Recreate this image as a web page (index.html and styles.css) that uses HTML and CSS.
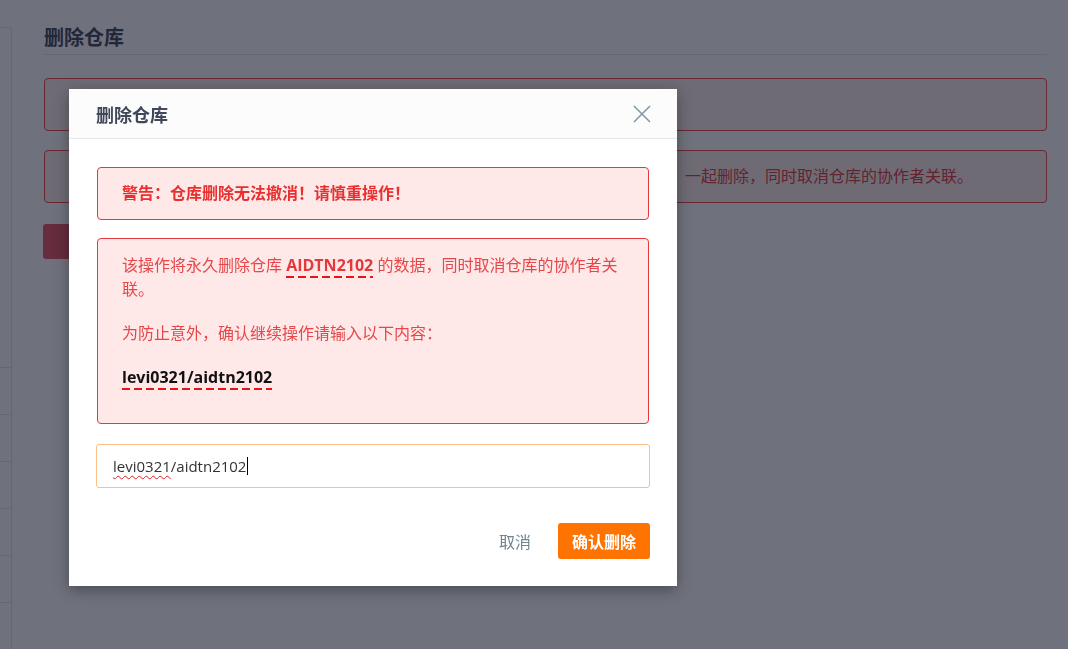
FILE: index.html
```html
<!DOCTYPE html>
<html lang="zh-CN">
<head>
<meta charset="utf-8">
<title>删除仓库</title>
<link rel="stylesheet" href="styles.css">
</head>
<body>
<div class="page">
  <aside class="sidebar">
    <div class="side-top"></div>
    <div class="side-row"></div>
    <div class="side-row"></div>
    <div class="side-row"></div>
    <div class="side-row"></div>
    <div class="side-row"></div>
    <div class="side-row"></div>
  </aside>
  <main class="main">
    <h2 class="page-title">删除仓库</h2>
    <div class="bg-alert">删除仓库是不可恢复的操作，请谨慎操作。</div>
    <div class="bg-alert">删除仓库将会把仓库中的代码、提交记录、分支、标签、评论、附件以及所有相关数据&ensp;一起删除，同时取消仓库的协作者关联。</div>
    <button class="bg-btn">删除仓库</button>
  </main>
</div>

<div class="overlay">
  <div class="modal">
    <div class="modal-header">
      <span class="modal-title">删除仓库</span>
      <button class="close" aria-label="关闭">
        <svg width="18" height="18" viewBox="0 0 18 18"><path d="M1 1 L17 17 M17 1 L1 17" stroke="#8399a6" stroke-width="1.6" fill="none"/></svg>
      </button>
    </div>
    <div class="modal-body">
      <div class="alert alert-warn">警告：仓库删除无法撤消！请慎重操作！</div>
      <div class="alert alert-info">
        <p>该操作将永久删除仓库 <b class="dash">AIDTN2102</b> 的数据，同时取消仓库的协作者关联。</p>
        <p>为防止意外，确认继续操作请输入以下内容：</p>
        <p><b class="dash dark">levi0321/aidtn2102</b></p>
      </div>
      <div class="input"><span class="spell">levi0321</span>/aidtn2102<span class="caret"></span></div>
    </div>
    <div class="modal-footer">
      <button class="btn-cancel">取消</button>
      <button class="btn-danger">确认删除</button>
    </div>
  </div>
</div>
</body>
</html>
```

FILE: styles.css
```css
* { box-sizing: border-box; }
html, body { margin: 0; height: 100%; }
body {
  background: #fff;
  font-family: "Open Sans", "Noto Sans CJK SC", sans-serif;
  color: #333;
  overflow: hidden;
}
button { font-family: inherit; cursor: pointer; }

.page { display: flex; height: 100vh; }

.sidebar {
  width: 12px;
  margin-top: 27px;
  border-top: 1px solid #e3e3e6;
  border-right: 1px solid #e3e3e6;
  border-radius: 0 4px 0 0;
}
.side-top { height: 340px; border-bottom: 1px solid #e3e3e6; }
.side-row { height: 47px; border-bottom: 1px solid #e3e3e6; }

.main {
  margin-left: 32px;
  width: 1003px;
  padding-top: 24px;
  display: flex;
  flex-direction: column;
  align-items: flex-start;
}
.page-title {
  align-self: stretch;
  margin: 0;
  font-size: 20px;
  font-weight: bold;
  line-height: 28px;
  color: #40485b;
  padding-bottom: 2px;
  border-bottom: 1px solid #e6e6ea;
}
.bg-alert {
  align-self: stretch;
  margin-top: 23px;
  padding: 14px 24px 14px 24px;
  line-height: 23px;
  font-size: 16px;
  color: #e4393c;
  background: #fff0ee;
  border: 1px solid #f04a4c;
  border-radius: 4px;
  white-space: nowrap;
}
.bg-alert + .bg-alert { margin-top: 19px; }
.bg-btn {
  margin-top: 21px;
  margin-left: -1px;
  width: 120px;
  height: 35px;
  border: none;
  border-radius: 3px;
  background: #e65565;
  color: #fff;
  font-size: 15px;
}

.overlay {
  position: fixed;
  inset: 0;
  background: rgba(15, 18, 37, 0.6);
}
.modal {
  margin: 89px 0 0 69px;
  width: 608px;
  background: #fff;
  box-shadow: 0 4px 14px rgba(0, 0, 0, 0.35);
}
.modal-header {
  height: 50px;
  background: #fcfcfc;
  border-bottom: 1px solid #e3e8ee;
  display: flex;
  align-items: center;
  justify-content: space-between;
  padding: 0 26px 0 27px;
}
.modal-title {
  font-size: 18px;
  font-weight: bold;
  color: #40485b;
}
.close {
  width: 18px;
  height: 18px;
  padding: 0;
  border: none;
  background: none;
  display: flex;
}

.modal-body { padding: 28px 28px 0; }
.alert {
  border: 1px solid #e4393c;
  border-radius: 4px;
  background: #ffe8e8;
  padding: 14px 24px;
  font-size: 16px;
}
.alert-warn {
  line-height: 23px;
  font-weight: bold;
  color: #e8302f;
}
.alert-info {
  margin-top: 18px;
  line-height: 24px;
  color: #e5474a;
}
.alert-info p { margin: 0 0 20px; }
.dash {
  font-weight: bold;
  color: #e4393c;
  padding-bottom: 2px;
  background-image: linear-gradient(to right, #e8141a 0 8px, transparent 8px 12px);
  background-size: 12px 2px;
  background-repeat: repeat-x;
  background-position: left bottom;
}
.dash.dark { color: #111; }

.input {
  margin: 20px -1px 0;
  height: 44px;
  border: 1px solid #fbbf87;
  border-radius: 3px;
  padding: 0 16px;
  display: flex;
  align-items: center;
  font-size: 15px;
  color: #333;
}
.spell {
  text-decoration: underline wavy #e02020 1px;
  text-underline-offset: 3px;
}
.caret {
  display: inline-block;
  width: 1px;
  height: 18px;
  background: #000;
  margin-left: 1px;
}

.modal-footer {
  display: flex;
  justify-content: flex-end;
  align-items: center;
  gap: 27px;
  padding: 35px 27px 27px 28px;
}
.btn-cancel {
  border: none;
  background: none;
  padding: 0;
  font-size: 16px;
  color: #6f8592;
}
.btn-danger {
  height: 36px;
  padding: 0 14px;
  border: none;
  border-radius: 3px;
  background: #ff7300;
  color: #fff;
  font-size: 16px;
  font-weight: bold;
}
```
